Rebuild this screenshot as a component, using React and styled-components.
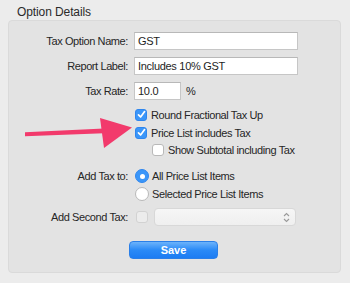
import React from "react";
import styled, { createGlobalStyle } from "styled-components";

const Global = createGlobalStyle`
  html, body { margin: 0; padding: 0; background: #ececec; }
  body { font-family: "Liberation Sans", Arial, sans-serif; }
`;

const Page = styled.div`
  position: relative;
  width: 350px;
  height: 283px;
  background: #ececec;
  box-sizing: border-box;
  padding: 5px 9px 0 8px;
  color: #262626;
`;

const Title = styled.div`
  font-size: 12px;
  letter-spacing: -0.1px;
  line-height: 15px;
  height: 15px;
  padding-left: 9px;
  color: #2a2a2a;
`;

const Panel = styled.div`
  box-sizing: border-box;
  width: 333px;
  height: 253px;
  background: #e3e3e3;
  border: 1px solid #dadada;
  border-radius: 4px;
  padding-top: 11px;
  display: flex;
  flex-direction: column;
`;

const Row = styled.div`
  display: grid;
  grid-template-columns: 119px 1fr;
  column-gap: 6px;
  align-items: center;
  height: ${(p) => p.$h || 18}px;
  margin-top: ${(p) => p.$mt || 0}px;
`;

const Label = styled.div`
  font-size: 11px;
  letter-spacing: -0.4px;
  text-align: right;
  white-space: nowrap;
`;

const Cell = styled.div`
  display: flex;
  align-items: center;
  padding-left: ${(p) => p.$indent || 0}px;
  height: 100%;
`;

const Field = styled.div`
  box-sizing: border-box;
  width: ${(p) => p.$w}px;
  height: 18px;
  background: #fff;
  border: 1px solid #c6c6c6;
  border-top-color: #b8b8b8;
  font-size: 11px;
  letter-spacing: -0.3px;
  line-height: 16px;
  padding-left: 3px;
  color: #1e1e1e;
`;

const Unit = styled.span`
  font-size: 11px;
  margin-left: 5px;
`;

const Box = styled.span`
  box-sizing: border-box;
  flex: none;
  width: 12px;
  height: 12px;
  border-radius: 3px;
  display: inline-flex;
  align-items: center;
  justify-content: center;
  background: ${(p) => (p.$checked ? "#3a96f9" : p.$disabled ? "#ececec" : "#fff")};
  border: 1px solid ${(p) => (p.$checked ? "#2f86ee" : p.$disabled ? "#d2d2d2" : "#b9b9b9")};
`;

const Radio = styled.span`
  box-sizing: border-box;
  flex: none;
  width: 14px;
  height: 14px;
  border-radius: 50%;
  display: inline-flex;
  align-items: center;
  justify-content: center;
  background: ${(p) => (p.$checked ? "#3a96f9" : "#fff")};
  border: 1px solid ${(p) => (p.$checked ? "#2f86ee" : "#b9b9b9")};
  &::after {
    content: "";
    width: 5px;
    height: 5px;
    border-radius: 50%;
    background: #fff;
    display: ${(p) => (p.$checked ? "block" : "none")};
  }
`;

const OptText = styled.span`
  font-size: 11px;
  letter-spacing: -0.4px;
  margin-left: ${(p) => p.$gap || 4}px;
  white-space: nowrap;
`;

const Popup = styled.div`
  box-sizing: border-box;
  margin-left: 6px;
  width: 142px;
  height: 18px;
  border-radius: 4px;
  background: linear-gradient(#f6f6f6, #efefef);
  border: 1px solid #d8d8d8;
  display: flex;
  align-items: center;
  justify-content: flex-end;
  padding-right: 5px;
`;

const ButtonRow = styled.div`
  display: flex;
  justify-content: flex-start;
  padding-left: 120px;
  margin-top: ${(p) => p.$mt || 0}px;
`;

const SaveButton = styled.button`
  box-sizing: border-box;
  width: 89px;
  height: 18px;
  border-radius: 4px;
  border: 1px solid #2a7fe8;
  background: linear-gradient(#6cb3fb, #2a8af7 50%, #1c7cf3);
  color: #fff;
  font-family: "Liberation Sans", Arial, sans-serif;
  font-size: 11px;
  font-weight: bold;
  padding: 0;
  line-height: 16px;
`;

const ArrowLayer = styled.svg`
  position: absolute;
  left: 0;
  top: 0;
  pointer-events: none;
`;

const Check = () => (
  <svg width="9" height="9" viewBox="0 0 9 9">
    <path d="M1.5 4.8 L3.6 7 L7.6 1.6" fill="none" stroke="#fff" strokeWidth="1.7" strokeLinecap="round" strokeLinejoin="round" />
  </svg>
);

export default function App() {
  return (
    <>
      <Global />
      <Page>
        <Title>Option Details</Title>
        <Panel>
          <Row>
            <Label>Tax Option Name:</Label>
            <Cell><Field $w={164}>GST</Field></Cell>
          </Row>
          <Row $mt={7}>
            <Label>Report Label:</Label>
            <Cell><Field $w={164}>Includes 10% GST</Field></Cell>
          </Row>
          <Row $mt={7}>
            <Label>Tax Rate:</Label>
            <Cell><Field $w={47}>10.0</Field><Unit>%</Unit></Cell>
          </Row>
          <Row $mt={6} $h={17}>
            <span />
            <Cell $indent={1}><Box $checked><Check /></Box><OptText>Round Fractional Tax Up</OptText></Cell>
          </Row>
          <Row $mt={1} $h={17}>
            <span />
            <Cell $indent={1}><Box $checked><Check /></Box><OptText>Price List includes Tax</OptText></Cell>
          </Row>
          <Row $h={17}>
            <span />
            <Cell $indent={18}><Box /><OptText>Show Subtotal including Tax</OptText></Cell>
          </Row>
          <Row $mt={9}>
            <Label>Add Tax to:</Label>
            <Cell $indent={1}><Radio $checked /><OptText $gap={3}>All Price List Items</OptText></Cell>
          </Row>
          <Row>
            <span />
            <Cell $indent={1}><Radio /><OptText $gap={3}>Selected Price List Items</OptText></Cell>
          </Row>
          <Row $mt={5}>
            <Label>Add Second Tax:</Label>
            <Cell $indent={2}>
              <Box $disabled />
              <Popup>
                <svg width="7" height="11" viewBox="0 0 7 11">
                  <path d="M1 4 L3.5 1.5 L6 4 M1 7 L3.5 9.5 L6 7" fill="none" stroke="#9a9a9a" strokeWidth="1.1" />
                </svg>
              </Popup>
            </Cell>
          </Row>
          <ButtonRow $mt={15}>
            <SaveButton>Save</SaveButton>
          </ButtonRow>
        </Panel>
        <ArrowLayer width="350" height="283" viewBox="0 0 350 283">
          <path d="M25 132.3 L104 128.5 L104 133.2 L25 136.2 Z" fill="#f23a6c" />
          <path d="M100 118 L132 127.5 L104 148 Z" fill="#f23a6c" />
        </ArrowLayer>
      </Page>
    </>
  );
}
